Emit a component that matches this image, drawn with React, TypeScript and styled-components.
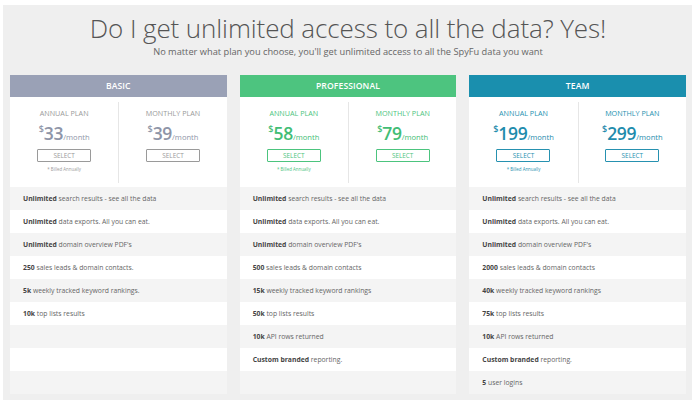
import React from "react";
import styled, { createGlobalStyle } from "styled-components";

const Global = createGlobalStyle`
  html, body { margin: 0; padding: 0; background: #ffffff; }
  body { font-family: "Open Sans", "DejaVu Sans", sans-serif; -webkit-font-smoothing: antialiased; }
  * { box-sizing: border-box; }
`;

type Tone = { header: string; accent: string; price: string };

const tones: Record<string, Tone> = {
  basic: { header: "#9aa1b6", accent: "#9a9a9a", price: "#8e95a8" },
  pro: { header: "#4dc47f", accent: "#4cc47e", price: "#42bd75" },
  team: { header: "#1a8fae", accent: "#2691b0", price: "#1f8cad" },
};

const Panel = styled.div`
  margin: 5px 6px 6px 3px;
  background: #efefef;
  padding: 7px 6px 4px 7px;
  height: 395px;
`;

const Title = styled.h1`
  margin: 0;
  text-align: center;
  font-weight: 300;
  font-size: 26px;
  line-height: 32px;
  color: #555555;
  letter-spacing: -0.1px;
`;

const Subtitle = styled.p`
  margin: 1px 0 0;
  text-align: center;
  font-size: 9.25px;
  line-height: 14px;
  color: #666666;
`;

const Grid = styled.div`
  margin-top: 16px;
  display: grid;
  grid-template-columns: repeat(3, 1fr);
  column-gap: 13px;
`;

const Card = styled.div`
  display: flex;
  flex-direction: column;
  background: #ffffff;
`;

const Header = styled.div<{ $bg: string }>`
  height: 22px;
  background: ${(p) => p.$bg};
  color: #ffffff;
  font-size: 8.6px;
  font-weight: 600;
  display: flex;
  align-items: center;
  justify-content: center;
  letter-spacing: 0.1px;
`;

const Plans = styled.div`
  height: 90px;
  display: grid;
  grid-template-columns: 1fr 1fr;
  padding: 5px 0 4px;
  background: #ffffff;
`;

const Plan = styled.div<{ $divider?: boolean }>`
  display: flex;
  flex-direction: column;
  align-items: center;
  padding-top: 7px;
  border-left: ${(p) => (p.$divider ? "1px solid #e6e6e6" : "none")};
`;

const PlanName = styled.div<{ $color: string }>`
  font-size: 7.2px;
  line-height: 9px;
  color: ${(p) => p.$color};
  text-transform: uppercase;
`;

const Price = styled.div<{ $color: string; $weight: number }>`
  margin-top: 5px;
  display: flex;
  align-items: flex-start;
  color: ${(p) => p.$color};
  font-weight: ${(p) => p.$weight};
  height: 20px;
`;

const Dollar = styled.span`
  font-size: 9px;
  line-height: 10px;
  margin-top: 1px;
`;

const Amount = styled.span`
  font-size: 17.5px;
  line-height: 20px;
  letter-spacing: -0.3px;
`;

const Per = styled.span`
  font-size: 7.6px;
  font-weight: 400;
  line-height: 10px;
  margin-top: 9px;
`;

const SelectButton = styled.button<{ $color: string }>`
  margin-top: 6px;
  width: 54px;
  height: 13px;
  padding: 0;
  border: 1px solid ${(p) => p.$color};
  border-radius: 1px;
  background: #ffffff;
  color: ${(p) => p.$color};
  font-family: inherit;
  font-size: 6.4px;
  line-height: 11px;
  text-transform: uppercase;
`;

const Billed = styled.div<{ $color: string }>`
  margin-top: 4px;
  font-size: 4.4px;
  line-height: 6px;
  color: ${(p) => p.$color};
`;

const Row = styled.div<{ $alt: boolean }>`
  height: 23px;
  line-height: 23px;
  padding-left: 13px;
  background: ${(p) => (p.$alt ? "#f4f4f4" : "#ffffff")};
  font-size: 6.8px;
  color: #666666;
  white-space: nowrap;
`;

const Strong = styled.b`
  font-weight: 700;
  color: #444444;
`;

type Feature = [string, string] | null;

type PlanData = {
  key: string;
  name: string;
  annual: string;
  monthly: string;
  weight: number;
  features: Feature[];
};

const plans: PlanData[] = [
  {
    key: "basic",
    name: "BASIC",
    annual: "33",
    monthly: "39",
    weight: 600,
    features: [
      ["Unlimited", "search results - see all the data"],
      ["Unlimited", "data exports. All you can eat."],
      ["Unlimited", "domain overview PDF's"],
      ["250", "sales leads & domain contacts."],
      ["5k", "weekly tracked keyword rankings."],
      ["10k", "top lists results"],
      null,
      null,
      null,
    ],
  },
  {
    key: "pro",
    name: "PROFESSIONAL",
    annual: "58",
    monthly: "79",
    weight: 600,
    features: [
      ["Unlimited", "search results - see all the data"],
      ["Unlimited", "data exports. All you can eat."],
      ["Unlimited", "domain overview PDF's"],
      ["500", "sales leads & domain contacts"],
      ["15k", "weekly tracked keyword rankings"],
      ["50k", "top lists results"],
      ["10k", "API rows returned"],
      ["Custom branded", "reporting."],
      null,
    ],
  },
  {
    key: "team",
    name: "TEAM",
    annual: "199",
    monthly: "299",
    weight: 600,
    features: [
      ["Unlimited", "search results - see all the data"],
      ["Unlimited", "data exports. All you can eat."],
      ["Unlimited", "domain overview PDF's"],
      ["2000", "sales leads & domain contacts"],
      ["40k", "weekly tracked keyword rankings"],
      ["75k", "top lists results"],
      ["10k", "API rows returned"],
      ["Custom branded", "reporting."],
      ["5", "user logins"],
    ],
  },
];

function PlanColumn({
  label,
  amount,
  tone,
  weight,
  billed,
  divider,
}: {
  label: string;
  amount: string;
  tone: Tone;
  weight: number;
  billed?: boolean;
  divider?: boolean;
}) {
  return (
    <Plan $divider={divider}>
      <PlanName $color={tone.accent}>{label}</PlanName>
      <Price $color={tone.price} $weight={weight}>
        <Dollar>$</Dollar>
        <Amount>{amount}</Amount>
        <Per>/month</Per>
      </Price>
      <SelectButton $color={tone.accent}>Select</SelectButton>
      {billed && <Billed $color={tone.accent}>* Billed Annually</Billed>}
    </Plan>
  );
}

export default function App() {
  return (
    <>
      <Global />
      <Panel>
        <Title>Do I get unlimited access to all the data? Yes!</Title>
        <Subtitle>
          No matter what plan you choose, you'll get unlimited access to all the SpyFu data you want
        </Subtitle>
        <Grid>
          {plans.map((p) => {
            const tone = tones[p.key];
            return (
              <Card key={p.key}>
                <Header $bg={tone.header}>{p.name}</Header>
                <Plans>
                  <PlanColumn label="Annual Plan" amount={p.annual} tone={tone} weight={p.weight} billed />
                  <PlanColumn label="Monthly Plan" amount={p.monthly} tone={tone} weight={p.weight} divider />
                </Plans>
                {p.features.map((f, i) => (
                  <Row key={i} $alt={i % 2 === 0}>
                    {f && (
                      <>
                        <Strong>{f[0]}</Strong> {f[1]}
                      </>
                    )}
                  </Row>
                ))}
              </Card>
            );
          })}
        </Grid>
      </Panel>
    </>
  );
}
